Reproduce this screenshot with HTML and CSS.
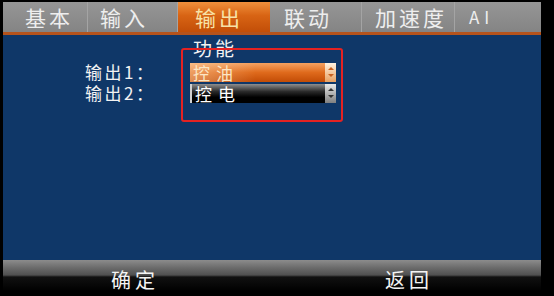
FILE: index.html
```html
<!DOCTYPE html>
<html lang="zh-CN">
<head>
  <meta charset="UTF-8" />
  <meta name="viewport" content="width=device-width, initial-scale=1.0"/>
  <title>输出设置</title>
  <link rel="stylesheet" href="styles.css">
</head>
<body>
  <div class="screen">
    <div class="tabs">
      <div class="tab t1">基本</div>
      <div class="tab t2">输入</div>
      <div class="tab t3 active">输出</div>
      <div class="tab t4">联动</div>
      <div class="tab t5">加速度</div>
      <div class="tab t6">AI</div>
    </div>
    <div class="content">
      <div class="form">
        <div class="head">功能</div>
        <div class="label">输出1：</div>
        <div class="select orange"><span>控油</span><i class="arrow"></i></div>
        <div class="label">输出2：</div>
        <div class="select dark"><span>控电</span><i class="arrow"></i></div>
      </div>
      <div class="highlight"></div>
    </div>
    <div class="softkeys">
      <span class="key ok">确定</span>
      <span class="key back">返回</span>
    </div>
  </div>
</body>
</html>
```

FILE: styles.css
```css
body {
  margin: 0;
  background: #000;
  font-family: "Noto Sans CJK SC", "DejaVu Sans", sans-serif;
  color: #f2f2f2;
}
.screen {
  width: 538px;
  margin: 2px 0 0 3px;
}
.tabs {
  display: flex;
  height: 30px;
  background: linear-gradient(#969696, #848484);
  border-bottom: 3px solid #b5531c;
}
.tab {
  box-sizing: border-box;
  font-size: 21px;
  line-height: 30px;
  letter-spacing: 3px;
  color: #eeeeee;
  border-right: 1px solid #a4a4a4;
  white-space: nowrap;
  overflow: hidden;
}
.t1 { width: 85px; padding-left: 22px; }
.t2 { width: 90px; padding-left: 12px; }
.t3 { width: 92px; padding-left: 17px; }
.t4 { width: 92px; padding-left: 14px; }
.t5 { width: 93px; padding-left: 13px; }
.t6 { flex: 1; padding-left: 14px; border-right: none; font-size: 17px; letter-spacing: 5px; }
.tab.active {
  background: linear-gradient(#f0903c 0%, #d86414 45%, #c24e08 100%);
  color: #f7e2a8;
  border-right: none;
}
.content {
  position: relative;
  height: 225px;
  background: #0f3768;
}
.form {
  display: grid;
  grid-template-columns: 105px 146px;
  grid-template-rows: 23px 19px 19px;
  row-gap: 2px;
  padding: 3px 0 0 82px;
}
.head {
  grid-column: 2;
  font-size: 19px;
  line-height: 20px;
  letter-spacing: 3px;
  padding-left: 3px;
}
.label {
  font-size: 17px;
  line-height: 17px;
  letter-spacing: 2.5px;
}
.select {
  display: flex;
  align-items: center;
  justify-content: space-between;
  height: 19px;
  font-size: 17px;
  letter-spacing: 6px;
}
.select span {
  padding-left: 3px;
  line-height: 19px;
}
.select.orange {
  background: linear-gradient(90deg, rgba(255,220,180,0.45), rgba(255,220,180,0) 45%),
              linear-gradient(#f3a262 0%, #df6a1c 50%, #c24c06 100%);
  color: #fbe6c4;
}
.select.dark {
  background: linear-gradient(#8e8e8e 0%, #2a2a2a 40%, #000 70%);
  border-left: 2px solid #d0d0d0;
  color: #fff;
}
.arrow {
  width: 11px;
  height: 19px;
  background: linear-gradient(#fff2e0, #e8a060);
  position: relative;
}
.dark .arrow {
  background: linear-gradient(#e8e8e8, #808080);
}
.arrow::before,
.arrow::after {
  content: "";
  position: absolute;
  left: 3px;
  border-left: 3px solid transparent;
  border-right: 3px solid transparent;
}
.arrow::before { top: 4px; border-bottom: 3px solid #c86020; }
.arrow::after { top: 11px; border-top: 3px solid #c86020; }
.dark .arrow::before { border-bottom-color: #333; }
.dark .arrow::after { border-top-color: #333; }
.highlight {
  position: absolute;
  left: 178px;
  top: 13px;
  width: 158px;
  height: 70px;
  border: 2px solid #e42222;
  border-radius: 3px;
}
.softkeys {
  height: 31px;
  display: flex;
  background: linear-gradient(#8c8c8c 0, #6a6a6a 8px, #505050 15px, #111 17px, #000 100%);
}
.key {
  font-size: 20px;
  line-height: 22px;
  letter-spacing: 4px;
  padding-top: 9px;
  color: #f4f4f4;
}
.ok { margin-left: 108px; }
.back { margin-left: 226px; }
```
